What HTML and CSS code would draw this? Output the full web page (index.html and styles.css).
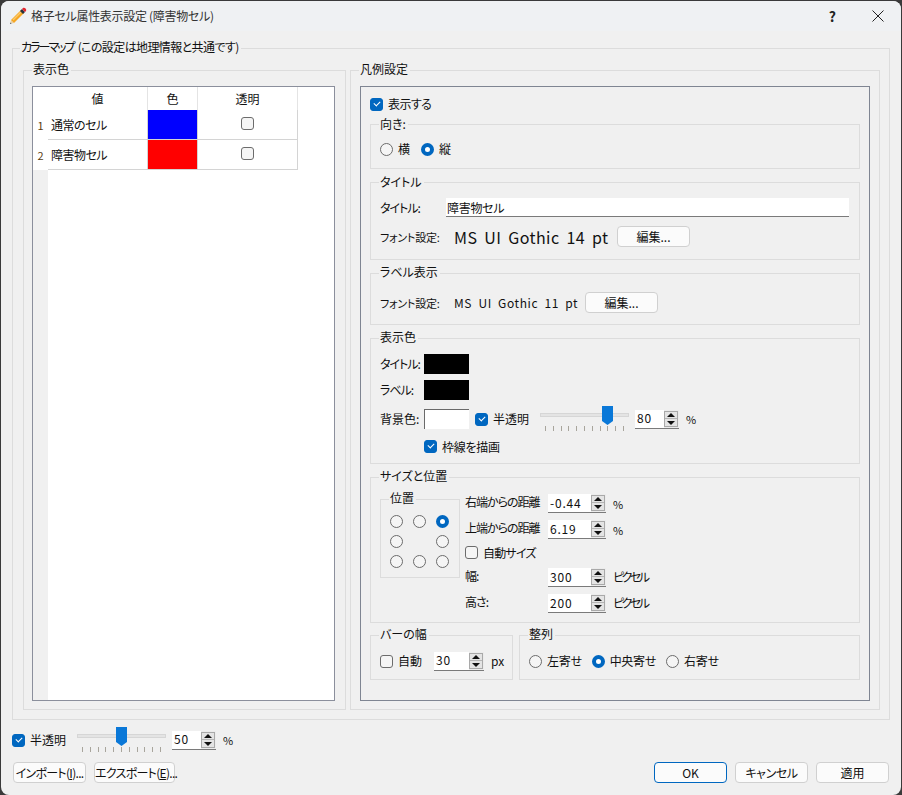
FILE: index.html
```html
<!DOCTYPE html>
<html lang="ja">
<head>
    <meta charset="UTF-8">
    <title>格子セル属性表示設定 (障害物セル)</title>
    <link rel="stylesheet" href="styles.css">
</head>
<body>
    <svg class="defs" width="0" height="0">
        <symbol id="sliderBase" viewBox="0 0 90 28">
            <rect x="0.5" y="7.5" width="88" height="3" fill="#e4e4e4" stroke="#d6d6d6"/>
            <path d="M5.500 20v5M13.500 20v5M21.500 20v5M28.500 20v5M36.500 20v5M44.500 20v5M52.500 20v5M60.500 20v5M67.500 20v5M75.500 20v5M83.500 20v5" stroke="#a8a59c"/>
        </symbol>
    </svg>

    <div class="window">
        <!-- Title bar -->
        <div class="titlebar">
            <svg class="app-icon" width="18" height="18" viewBox="0 0 18 18">
                <path d="M1 17l1-4 3 3z" fill="#e8d2a8"/>
                <path d="M1 17l.4-1.600 1.200 1.200z" fill="#44546a"/>
                <path d="M2 13L12 3l3 3L5 16z" fill="#f5a623"/>
                <path d="M3.500 12.500L12 4l1 1-8.500 8.500z" fill="#fbc96b"/>
                <path d="M11 4l2-2 3 3-2 2z" fill="#26323e"/>
                <path d="M13 2l1-1c1-.5 2 0 2.500 .5s1 1.500 .5 2.500l-1 1z" fill="#e3262e"/>
            </svg>
            <span class="title-text">格子セル属性表示設定 (障害物セル)</span>
            <span class="help-btn">?</span>
            <svg class="close-btn" width="12" height="12" viewBox="0 0 12 12">
                <path d="M.5 .5l11 11M11.500 .5l-11 11" stroke="#222" fill="none"/>
            </svg>
        </div>

        <div class="content">
            <!-- Color map -->
            <div class="group outer-group">
                <span class="group-title outer-title"><span class="kana-tight">カラーマップ</span> (この設定は地理情報と共通です)</span>

                <div class="group colors-group">
                    <span class="group-title">表示色</span>
                    <div class="table-frame">
                        <table class="color-table">
                            <tr>
                                <th class="row-no"></th>
                                <th class="col-value">値</th>
                                <th class="col-color">色</th>
                                <th class="col-alpha">透明</th>
                            </tr>
                            <tr>
                                <td class="row-no">1</td>
                                <td class="cell-name">通常のセル</td>
                                <td class="cell-blue"></td>
                                <td class="cell-center"><input type="checkbox" class="check"></td>
                            </tr>
                            <tr>
                                <td class="row-no">2</td>
                                <td class="cell-name">障害物セル</td>
                                <td class="cell-red"></td>
                                <td class="cell-center"><input type="checkbox" class="check"></td>
                            </tr>
                        </table>
                    </div>
                </div>

                <div class="group legend-group">
                    <span class="group-title">凡例設定</span>
                    <div class="legend-frame">
                        <label class="opt show-row"><input type="checkbox" class="check" checked>表示する</label>

                        <div class="group orient-group">
                            <span class="group-title title-low">向き:</span>
                            <label class="opt"><input type="radio" class="radio" name="orient">横</label>
                            <label class="opt"><input type="radio" class="radio" name="orient" checked>縦</label>
                        </div>

                        <div class="group title-group">
                            <span class="group-title title-low">タイトル</span>
                            <div class="form-row">
                                <span class="form-label title-label">タイトル:</span>
                                <input type="text" class="text-input" value="障害物セル">
                            </div>
                            <div class="form-row font-row">
                                <span class="form-label">フォント設定:</span>
                                <span class="font-name font-name-lg">MS UI Gothic 14 pt</span>
                                <button class="btn">編集...</button>
                            </div>
                        </div>

                        <div class="group label-group">
                            <span class="group-title">ラベル表示</span>
                            <div class="form-row font-row">
                                <span class="form-label">フォント設定:</span>
                                <span class="font-name font-name-sm">MS UI Gothic 11 pt</span>
                                <button class="btn">編集...</button>
                            </div>
                        </div>

                        <div class="group display-group">
                            <span class="group-title">表示色</span>
                            <div class="form-row swatch-row">
                                <span class="form-label swatch-label">タイトル:</span>
                                <span class="swatch"></span>
                            </div>
                            <div class="form-row swatch-row">
                                <span class="form-label swatch-label">ラベル:</span>
                                <span class="swatch"></span>
                            </div>
                            <div class="form-row swatch-row bg-row">
                                <span class="form-label swatch-label">背景色:</span>
                                <span class="swatch swatch-white"></span>
                                <label class="opt alpha-opt"><input type="checkbox" class="check" checked>半透明</label>
                                <svg class="slider" width="90" height="28">
                                    <use href="#sliderBase"/>
                                    <path d="M62 0h11v15l-5.500 4-5.500-4z" fill="#0a78d8"/>
                                </svg>
                                <span class="spin spin-s"><input class="spin-value" value="80"><span class="spin-btn"></span></span>
                                <span class="unit unit-pct">%</span>
                            </div>
                            <label class="opt border-row"><input type="checkbox" class="check" checked>枠線を描画</label>
                        </div>

                        <div class="group size-group">
                            <span class="group-title">サイズと位置</span>
                            <div class="group pos-group">
                                <span class="group-title">位置</span>
                                <div class="pos-grid">
                                    <input type="radio" class="radio" name="pos">
                                    <input type="radio" class="radio" name="pos">
                                    <input type="radio" class="radio" name="pos" checked>
                                    <input type="radio" class="radio" name="pos">
                                    <span></span>
                                    <input type="radio" class="radio" name="pos">
                                    <input type="radio" class="radio" name="pos">
                                    <input type="radio" class="radio" name="pos">
                                    <input type="radio" class="radio" name="pos">
                                </div>
                            </div>
                            <div class="size-fields">
                                <div class="form-row">
                                    <span class="form-label size-label">右端からの距離</span>
                                    <span class="spin spin-l"><input class="spin-value" value="-0.44"><span class="spin-btn"></span></span>
                                    <span class="unit unit-pct">%</span>
                                </div>
                                <div class="form-row">
                                    <span class="form-label size-label">上端からの距離</span>
                                    <span class="spin spin-l"><input class="spin-value" value="6.19"><span class="spin-btn"></span></span>
                                    <span class="unit unit-pct">%</span>
                                </div>
                                <label class="opt auto-row"><input type="checkbox" class="check">自動サイズ</label>
                                <div class="form-row">
                                    <span class="form-label size-label">幅:</span>
                                    <span class="spin spin-l"><input class="spin-value" value="300"><span class="spin-btn"></span></span>
                                    <span class="unit unit-kana">ピクセル</span>
                                </div>
                                <div class="form-row">
                                    <span class="form-label size-label">高さ:</span>
                                    <span class="spin spin-l"><input class="spin-value" value="200"><span class="spin-btn"></span></span>
                                    <span class="unit unit-kana">ピクセル</span>
                                </div>
                            </div>
                        </div>

                        <div class="bottom-row">
                            <div class="group bar-group">
                                <span class="group-title">バーの幅</span>
                                <label class="opt bar-auto"><input type="checkbox" class="check">自動</label>
                                <span class="spin spin-m"><input class="spin-value" value="30"><span class="spin-btn"></span></span>
                                <span class="unit">px</span>
                            </div>
                            <div class="group align-group">
                                <span class="group-title">整列</span>
                                <label class="opt"><input type="radio" class="radio" name="align">左寄せ</label>
                                <label class="opt"><input type="radio" class="radio" name="align" checked>中央寄せ</label>
                                <label class="opt"><input type="radio" class="radio" name="align">右寄せ</label>
                            </div>
                        </div>
                    </div>
                </div>
            </div>

            <!-- Footer -->
            <div class="alpha-row">
                <label class="opt footer-alpha"><input type="checkbox" class="check" checked>半透明</label>
                <svg class="slider" width="90" height="28">
                    <use href="#sliderBase"/>
                    <path d="M39 0h11v15l-5.500 4-5.500-4z" fill="#0a78d8"/>
                </svg>
                <span class="spin spin-s"><input class="spin-value" value="50"><span class="spin-btn"></span></span>
                <span class="unit unit-pct">%</span>
            </div>
            <div class="button-row">
                <button class="btn btn-import">インポート(<u>I</u>)...</button>
                <button class="btn btn-export">エクスポート(<u>E</u>)...</button>
                <button class="btn btn-ok">OK</button>
                <button class="btn btn-cancel">キャンセル</button>
                <button class="btn btn-apply">適用</button>
            </div>
        </div>
    </div>
</body>
</html>
```

FILE: styles.css
```css
/* General Styles */
body {
    margin: 0;
    width: 902px;
    height: 795px;
    overflow: hidden;
    background: #3a3a3a;
    font-family: "Noto Sans CJK JP", "Noto Sans", sans-serif;
    font-size: 12px;
    line-height: 16px;
    color: #111;
    font-feature-settings: "palt";
}

.defs {
    display: block;
    height: 0;
}

.window {
    margin: 1px 1px 0;
    width: 900px;
    height: 794px;
    background: #f0f0f0;
    border-radius: 8px;
    overflow: hidden;
}

/* Title bar */
.titlebar {
    display: flex;
    align-items: center;
    height: 30px;
    background: #eff1f3;
}

.app-icon {
    margin-left: 8px;
}

.title-text {
    margin-left: 4px;
    color: #333;
    letter-spacing: -0.3px;
}

.help-btn {
    margin-left: auto;
    font-size: 14px;
    font-weight: 700;
    color: #222;
}

.close-btn {
    margin-left: 36px;
    margin-right: 17px;
}

.content {
    padding: 17px 11px 0;
}

/* Group boxes */
.group {
    position: relative;
    box-sizing: border-box;
    border: 1px solid #dcdcdc;
}

.group-title {
    position: absolute;
    top: -10px;
    left: 8px;
    padding: 0 2px 0 1px;
    background: #f0f0f0;
    white-space: nowrap;
}

.title-low {
    top: -9px;
}

.outer-group {
    display: flex;
    gap: 4px;
    width: 878px;
    height: 672px;
    padding: 21px 9px 9px 10px;
}

.outer-title {
    left: 7px;
    letter-spacing: -0.6px;
    word-spacing: 2px;
}

.kana-tight {
    letter-spacing: -2px;
}

.colors-group {
    width: 323px;
    height: 640px;
    padding: 15px 10px 8px 8px;
}

.legend-group {
    width: 530px;
    height: 640px;
    padding: 15px 9px 8px 9px;
}

/* Colour table */
.table-frame {
    box-sizing: border-box;
    height: 615px;
    border: 1px solid #8b8f9c;
    background: linear-gradient(to right, #f0f0f0 15px, #fff 15px);
}

.color-table {
    border-collapse: separate;
    border-spacing: 0;
    table-layout: fixed;
    width: 265px;
}

.color-table th {
    box-sizing: border-box;
    height: 23px;
    padding: 0;
    font-weight: 400;
    background: #fff;
    border-right: 1px solid #e4e4e4;
}

.color-table td {
    box-sizing: border-box;
    height: 30px;
    padding: 0 0 0 3px;
    background: #fff;
    border-right: 1px solid #d4d4d4;
    border-bottom: 1px solid #d4d4d4;
}

.color-table .row-no {
    width: 15px;
    padding: 0;
    text-align: center;
    border: none;
    color: #5a3c10;
    font-size: 11px;
}

.color-table .cell-name {
    letter-spacing: -0.5px;
}

.col-value {
    width: 100px;
}

.col-color {
    width: 50px;
}

.col-alpha {
    width: 100px;
}

.color-table .cell-blue {
    background: #0000ff;
}

.color-table .cell-red {
    background: #ff0000;
}

.color-table .cell-center {
    padding: 0;
    text-align: center;
}

.cell-center .check {
    vertical-align: middle;
    margin-bottom: 3px;
}

/* Legend panel */
.legend-frame {
    display: flex;
    flex-direction: column;
    gap: 13px;
    box-sizing: border-box;
    height: 615px;
    padding: 10px 9px;
    border: 1px solid #7f8592;
}

/* Checks and radios */
.opt {
    display: inline-flex;
    align-items: center;
    gap: 5px;
    white-space: nowrap;
}

.check,
.radio {
    appearance: none;
    display: inline-block;
    position: relative;
    box-sizing: border-box;
    flex: none;
    width: 13px;
    height: 13px;
    margin: 0;
    background: #f5f5f5;
    border: 1px solid #6c6c6c;
}

.check {
    border-radius: 3px;
}

.check:checked {
    background: #0067c0;
    border-color: #0067c0;
}

.check:checked::after {
    content: "";
    position: absolute;
    left: 3px;
    top: 2px;
    width: 5px;
    height: 3px;
    border-left: 1px solid #fff;
    border-bottom: 1px solid #fff;
    transform: rotate(-45deg);
}

.radio {
    border-radius: 50%;
}

.radio:checked {
    background: #fff;
    border: 4px solid #0067c0;
}

.show-row {
    align-self: flex-start;
    height: 14px;
    letter-spacing: -0.6px;
}

.orient-group {
    display: flex;
    gap: 11px;
    align-items: center;
    height: 45px;
    padding: 5px 0 0 9px;
}

.title-group {
    height: 78px;
    padding: 15px 9px 0;
}

.label-group {
    height: 52px;
    padding: 18px 9px 0;
}

.display-group {
    height: 126px;
    padding: 15px 9px 0;
}

.size-group {
    display: flex;
    gap: 5px;
    height: 146px;
    padding: 16px 9px 0;
}

.bottom-row {
    display: flex;
    gap: 6px;
    margin-top: -1px;
}

/* Form rows */
.form-row {
    display: flex;
    align-items: center;
}

.form-label {
    flex: none;
    white-space: nowrap;
}

.title-label {
    width: 66px;
    letter-spacing: -1px;
}

.font-row {
    height: 21px;
    margin-top: 9px;
}

.label-group .font-row {
    margin-top: 0;
}

.font-row .form-label {
    width: 74px;
    font-size: 11px;
    letter-spacing: -0.2px;
}

.font-name {
    flex: none;
    white-space: nowrap;
    word-spacing: 3px;
}

.font-name-lg {
    width: 163px;
    font-size: 16px;
    letter-spacing: 0.4px;
}

.font-name-sm {
    width: 131px;
    font-size: 12px;
    letter-spacing: 0.6px;
}

.text-input {
    box-sizing: border-box;
    width: 403px;
    height: 19px;
    padding: 0 1px;
    border: none;
    border-bottom: 1px solid #7a7a7a;
    background: #fff;
    font: inherit;
    font-feature-settings: inherit;
    letter-spacing: -0.3px;
    color: #111;
    outline: none;
}

.btn {
    box-sizing: border-box;
    flex: none;
    width: 73px;
    height: 21px;
    padding: 0;
    border: 1px solid #d0d0d0;
    border-radius: 4px;
    background: #fbfbfb;
    font: inherit;
    font-feature-settings: inherit;
    color: #111;
    white-space: nowrap;
}

/* Swatches */
.swatch-row {
    height: 20px;
    margin-bottom: 6px;
}

.swatch-label {
    width: 44px;
    letter-spacing: -1px;
}

.swatch {
    flex: none;
    box-sizing: border-box;
    width: 45px;
    height: 20px;
    background: #000;
}

.swatch-white {
    background: #fff;
    border-top: 1px solid #6a6a6a;
    border-left: 1px solid #6a6a6a;
}

.bg-row {
    margin-top: 9px;
    margin-bottom: 11px;
}

.bg-row .swatch-label {
    letter-spacing: 0;
}

.alpha-opt {
    width: 65px;
    margin-left: 6px;
}

.border-row {
    margin-left: 44px;
    height: 13px;
    letter-spacing: -0.3px;
}

/* Slider and spin boxes */
.slider {
    flex: none;
    align-self: flex-start;
    margin-top: -3px;
    margin-right: 5px;
}

.spin {
    display: inline-flex;
    flex: none;
    box-sizing: border-box;
    height: 19px;
    background: #ececec;
    border-bottom: 1px solid #7a7a7a;
}

.spin-s {
    width: 44px;
}

.spin-m {
    width: 50px;
}

.spin-l {
    width: 58px;
}

.spin-value {
    flex: 1;
    min-width: 0;
    box-sizing: border-box;
    height: 18px;
    padding: 0 0 2px 2px;
    border: none;
    background: #fff;
    font: inherit;
    font-size: 12px;
    letter-spacing: 0.8px;
    color: #111;
    outline: none;
}

.spin-btn {
    position: relative;
    flex: none;
    box-sizing: border-box;
    width: 14px;
    height: 16px;
    margin: 1px 1px 0 0;
    background: linear-gradient(#e4e4e4 6px, #b5b5b5 6px, #b5b5b5 7px, #e4e4e4 7px);
    border: 1px solid #a9a9a9;
}

.spin-btn::before,
.spin-btn::after {
    content: "";
    position: absolute;
    left: 2px;
    border-left: 4px solid transparent;
    border-right: 4px solid transparent;
}

.spin-btn::before {
    top: 1px;
    border-bottom: 4px solid #111;
}

.spin-btn::after {
    bottom: 1px;
    border-top: 4px solid #111;
}

.unit {
    margin-left: 7px;
    white-space: nowrap;
}

.unit-pct {
    font-size: 11px;
    letter-spacing: -1px;
}

.unit-kana {
    padding-bottom: 2px;
    letter-spacing: -2.500px;
}

/* Size and position */
.pos-group {
    flex: none;
    width: 80px;
    height: 79px;
    margin-top: 5px;
    padding: 15px 0 0 9px;
}

.pos-grid {
    display: grid;
    grid-template-columns: repeat(3, 13px);
    grid-auto-rows: 13px;
    column-gap: 10px;
    row-gap: 7px;
}

.size-fields {
    display: flex;
    flex-direction: column;
    gap: 7px;
}

.size-fields .form-row {
    height: 19px;
}

.size-label {
    box-sizing: border-box;
    width: 83px;
    padding-bottom: 3px;
    letter-spacing: -1px;
}

.auto-row {
    height: 13px;
    margin-bottom: 2px;
    letter-spacing: -0.8px;
}

.bar-group {
    display: flex;
    align-items: center;
    width: 143px;
    height: 45px;
    padding: 7px 0 0 9px;
}

.bar-auto {
    width: 54px;
}

.align-group {
    display: flex;
    align-items: center;
    gap: 10px;
    width: 341px;
    height: 45px;
    padding: 7px 0 0 9px;
}

.align-group .opt {
    letter-spacing: -0.3px;
}

/* Footer */
.alpha-row {
    display: flex;
    align-items: center;
    height: 20px;
    margin-top: 10px;
}

.footer-alpha {
    width: 65px;
}

.button-row {
    display: flex;
    gap: 8px;
    margin-top: 12px;
    margin-right: 1px;
}

.btn-import {
    margin-left: 1px;
    letter-spacing: -0.7px;
}

.btn-export {
    width: 81px;
    margin-right: auto;
    letter-spacing: -0.7px;
}

.btn-ok {
    border-color: #0067c0;
}

.btn-cancel {
    letter-spacing: -0.4px;
}
```
